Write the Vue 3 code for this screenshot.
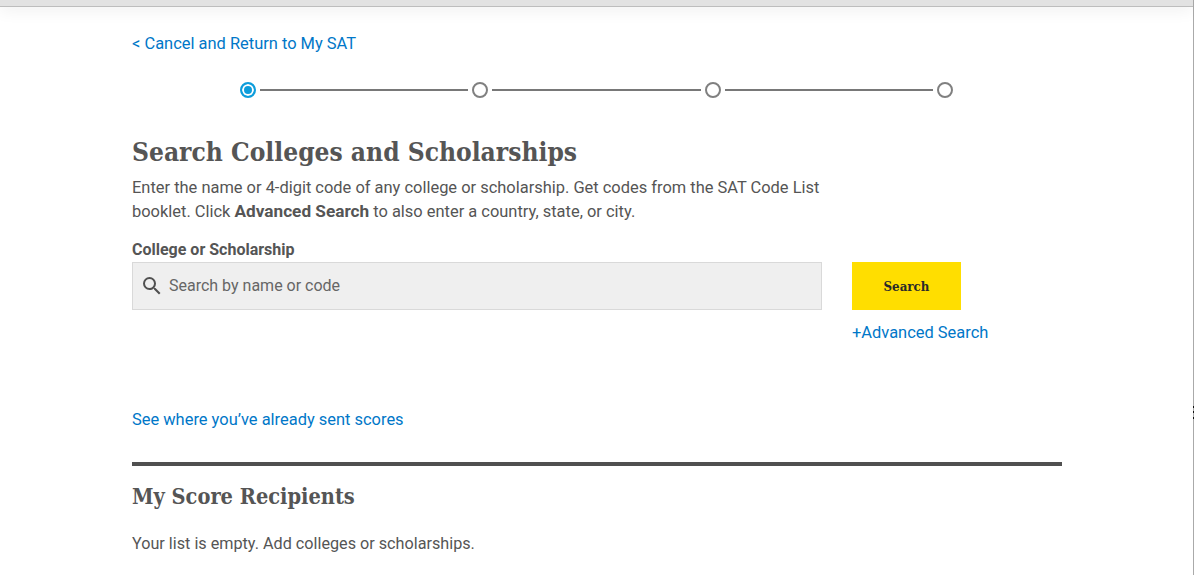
<script setup>
const steps = [0, 1, 2];
</script>

<template>
  <div class="page">
    <div class="topbar"></div>
    <span class="grip"></span>
    <main class="content">
      <a class="back">&lt; Cancel and Return to My SAT</a>
      <div class="stepper">
        <span class="dot active"></span>
        <template v-for="s in steps" :key="s">
          <span class="line"></span>
          <span class="dot"></span>
        </template>
      </div>
      <h1>Search Colleges and Scholarships</h1>
      <p class="intro">Enter the name or 4-digit code of any college or scholarship. Get codes from the SAT Code List booklet. Click <b>Advanced Search</b> to also enter a country, state, or city.</p>
      <label class="label">College or Scholarship</label>
      <div class="search-row">
        <div class="input">
          <svg width="24" height="24" viewBox="0 0 24 24"><path fill="#505050" d="M15.5 14h-.79l-.28-.27A6.47 6.47 0 0 0 16 9.5 6.5 6.5 0 1 0 9.5 16c1.61 0 3.09-.59 4.23-1.57l.27.28v.79l5 4.99L20.49 19l-4.99-5zm-6 0C7.01 14 5 11.99 5 9.5S7.01 5 9.5 5 14 7.01 14 9.5 11.99 14 9.5 14z"/></svg>
          <span class="placeholder">Search by name or code</span>
        </div>
        <div class="actions">
          <button class="btn">Search</button>
          <a class="adv">+Advanced Search</a>
        </div>
      </div>
      <a class="sent">See where you’ve already sent scores</a>
      <hr class="rule" />
      <h2>My Score Recipients</h2>
      <p class="empty">Your list is empty. Add colleges or scholarships.</p>
    </main>
  </div>
</template>

<style>
html, body { margin: 0; background: #fff; overflow: hidden; }
</style>
<style scoped>
.page { position: relative; height: 575px; box-sizing: border-box; border-right: 1px solid #aaa; font-family: Roboto, sans-serif; color: #555; font-size: 16.45px; }
.topbar { height: 6px; background: #e2e2e2; border-bottom: 1px solid #bdbdbd; box-shadow: 0 2px 16px rgba(0,0,0,.1); }
.grip { position: absolute; right: -1px; top: 406px; width: 1px; height: 13px; background: repeating-linear-gradient(#111 0 2px, transparent 2px 5.5px); }
.content { width: 930px; margin-left: 132px; display: flex; flex-direction: column; align-items: flex-start; }
a { color: #0077c8; }
.back { margin-top: 27px; line-height: 20px; }
.stepper { display: flex; align-items: center; gap: 4px; margin: 28px 0 0 108px; width: 713px; }
.dot { width: 12px; height: 12px; border: 2px solid #808080; border-radius: 50%; flex: none; }
.dot.active { border-color: #0d9ddb; background: #0d9ddb; box-shadow: inset 0 0 0 2px #fff; }
.line { flex: 1; height: 2px; background: #787878; }
h1 { font: 700 26.1px/36px "DejaVu Serif Condensed", "DejaVu Serif", serif; margin: 36px 0 0; }
.intro { width: 700px; margin: 6px 0 0; line-height: 24px; }
.intro b { font-size: 17.2px; line-height: 1; }
.label { font-weight: 700; margin-top: 16px; font-size: 16px; line-height: 20px; }
.search-row { display: flex; gap: 30px; margin-top: 2px; }
.input { width: 690px; height: 48px; box-sizing: border-box; background: #efefef; border: 1px solid #d9d9d9; display: flex; align-items: center; gap: 5px; padding-left: 7px; color: #666; font-size: 16px; }
.placeholder { padding-bottom: 2px; }
.actions { display: flex; flex-direction: column; align-items: flex-start; }
.btn { width: 109px; height: 48px; padding: 0; background: #ffde00; border: 0; font: 700 13.2px "DejaVu Serif Condensed", "DejaVu Serif", serif; color: #2a2a2a; }
.adv { margin-top: 13px; line-height: 20px; }
.sent { margin-top: 67px; line-height: 20px; }
.rule { width: 100%; height: 4px; background: #505050; border: 0; margin: 32px 0 0; }
h2 { font: 700 21.6px/28px "DejaVu Serif Condensed", "DejaVu Serif", serif; margin: 17px 0 0; }
.empty { margin: 21px 0 0; line-height: 24px; font-size: 16.2px; }
</style>
